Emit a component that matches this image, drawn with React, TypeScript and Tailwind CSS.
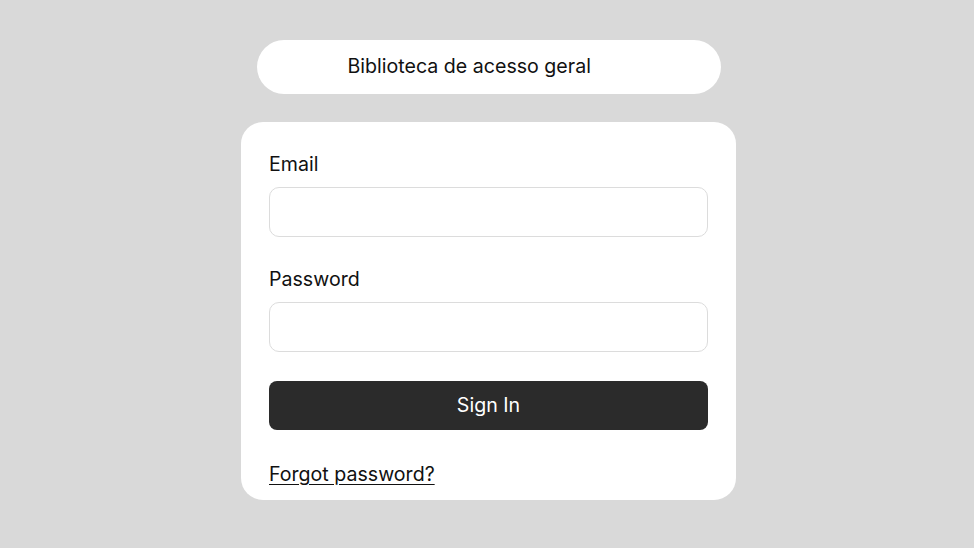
export default function App() {
  return (
    <div className="min-h-[548px] w-full bg-[#d9d9d9] flex flex-col items-center pt-[40px] pl-[3px]" style={{ fontFamily: 'Inter, "Noto Sans", sans-serif' }}>
      <div className="w-[464px] h-[54px] rounded-full bg-white flex items-center pl-[91px] text-[19.6px] text-[#111]">
        Biblioteca de acesso geral
      </div>
      <div className="mt-[28px] w-[495px] bg-white rounded-[22px] px-[28px] pt-[30px] pb-[14px] flex flex-col">
        <label className="text-[19.6px] leading-[24px] text-[#111]">Email</label>
        <input className="mt-[11px] h-[50px] rounded-[10px] border border-[#dcdcdc] outline-none px-3" />
        <label className="mt-[30px] text-[19.6px] leading-[24px] text-[#111]">Password</label>
        <input type="password" className="mt-[11px] h-[50px] rounded-[10px] border border-[#dcdcdc] outline-none px-3" />
        <button className="mt-[29px] h-[49px] rounded-[8px] bg-[#2b2b2b] text-white text-[19.6px]">Sign In</button>
        <a href="#" className="mt-[32px] self-start text-[19.6px] leading-[24px] text-[#111] underline underline-offset-[3px]">Forgot password?</a>
      </div>
    </div>
  );
}
